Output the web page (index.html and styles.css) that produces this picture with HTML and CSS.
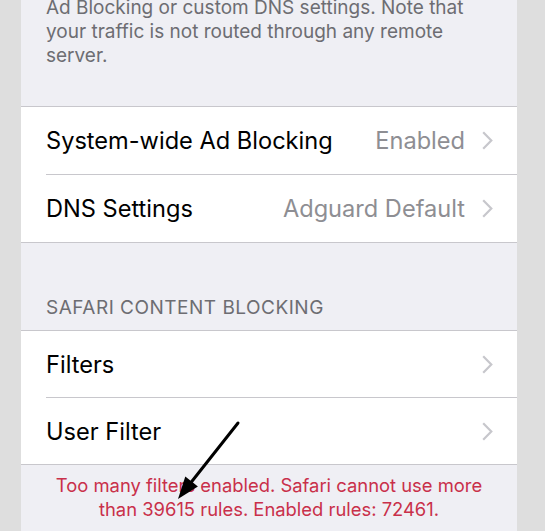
FILE: index.html
```html
<!DOCTYPE html>
<html>
<head>
<meta charset="utf-8">
<link rel="stylesheet" href="styles.css">
</head>
<body>
<div class="screen">
  <p class="desc">Ad Blocking or custom DNS settings. Note that your traffic is not routed through any remote server.</p>
  <div class="group group-first">
    <div class="row">
      <span class="label">System-wide Ad Blocking</span>
      <span class="value">Enabled</span>
      <svg class="chev" width="11" height="19" viewBox="0 0 11 19"><path d="M1.2 1.2 L9.3 9.5 L1.2 17.8" fill="none" stroke="#c7c7cc" stroke-width="2.2"/></svg>
    </div>
    <div class="row">
      <span class="label">DNS Settings</span>
      <span class="value">Adguard Default</span>
      <svg class="chev" width="11" height="19" viewBox="0 0 11 19"><path d="M1.2 1.2 L9.3 9.5 L1.2 17.8" fill="none" stroke="#c7c7cc" stroke-width="2.2"/></svg>
    </div>
  </div>
  <div class="header">SAFARI CONTENT BLOCKING</div>
  <div class="group">
    <div class="row">
      <span class="label">Filters</span>
      <svg class="chev" width="11" height="19" viewBox="0 0 11 19"><path d="M1.2 1.2 L9.3 9.5 L1.2 17.8" fill="none" stroke="#c7c7cc" stroke-width="2.2"/></svg>
    </div>
    <div class="row">
      <span class="label">User Filter</span>
      <svg class="chev" width="11" height="19" viewBox="0 0 11 19"><path d="M1.2 1.2 L9.3 9.5 L1.2 17.8" fill="none" stroke="#c7c7cc" stroke-width="2.2"/></svg>
    </div>
  </div>
  <p class="footer">Too many filters enabled. Safari cannot use more than 39615 rules. Enabled rules: 72461.</p>
  <svg class="arrow" width="90" height="90" viewBox="0 0 90 90">
    <line x1="78" y1="3" x2="29" y2="65" stroke="#000" stroke-width="3" stroke-linecap="round"/>
    <polygon points="18,79 25.3,56.6 37.9,66.6" fill="#000"/>
  </svg>
</div>
</body>
</html>
```

FILE: styles.css
```css
html, body {
  margin: 0;
  padding: 0;
}
body {
  background: #dedede;
  font-family: "Inter", "Liberation Sans", sans-serif;
  width: 545px;
  height: 531px;
  overflow: hidden;
}
.screen {
  position: relative;
  margin-left: 21px;
  width: 496px;
  height: 531px;
  background: #efeff4;
  overflow: hidden;
}
.desc {
  margin: -4px 0 0;
  padding: 0 26px 0 25px;
  font-size: 19px;
  line-height: 24px;
  color: #6d6d72;
  height: 110px;
}
.group {
  background: #fff;
  border-top: 1px solid #c8c7cc;
  border-bottom: 1px solid #c8c7cc;
}
.row {
  display: flex;
  align-items: center;
  height: 66px;
  padding: 0 24px 0 25px;
  position: relative;
}
.group-first .row {
  height: 67px;
}
.row + .row::before {
  content: "";
  position: absolute;
  left: 25px;
  right: 0;
  top: -1px;
  height: 1px;
  background: #c8c7cc;
}
.row + .row {
  border-top: 1px solid transparent;
}
.label {
  flex: 1;
  font-size: 23.6px;
  color: #000;
}
.value {
  font-size: 23.6px;
  color: #8e8e93;
  margin-right: 17px;
}
.chev {
  display: block;
}
.header {
  padding: 54px 25px 11px;
  font-size: 19px;
  letter-spacing: 0.5px;
  color: #6d6d72;
  line-height: 22px;
}
.footer {
  margin: 0;
  padding: 9px 20px 0;
  text-align: center;
  font-size: 18.4px;
  line-height: 23.5px;
  color: #c9304a;
}
.arrow {
  position: absolute;
  left: 139px;
  top: 420px;
}
```
